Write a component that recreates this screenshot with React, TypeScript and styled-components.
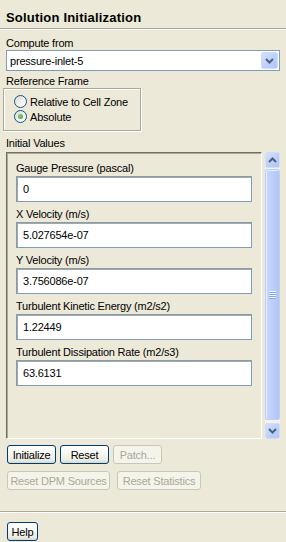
import styled, { createGlobalStyle } from 'styled-components';

const GlobalStyle = createGlobalStyle`
  html, body {
    margin: 0;
    background: #ece9d8;
  }
  body {
    font-family: "Liberation Sans", Arial, sans-serif;
    font-size: 11px;
    letter-spacing: -0.2px;
    color: #000;
  }
`;

const Root = styled.div`
  width: 286px;
  height: 542px;
  display: flex;
  flex-direction: column;
  overflow: hidden;
  background: #ece9d8;
`;

const Header = styled.div`
  padding: 9px 6px 1px;
  font-weight: bold;
  font-size: 13px;
  letter-spacing: 0.2px;
  line-height: 18px;
  border-bottom: 1px solid #aca899;
  box-shadow: 0 1px 0 #fff;
`;

const Body = styled.div`
  flex: 1;
  display: flex;
  flex-direction: column;
  padding: 0 6px;
`;

const Caption = styled.div<{ $top: number }>`
  margin-top: ${(p) => p.$top}px;
  line-height: 13px;
  white-space: nowrap;
`;

const Combo = styled.div`
  box-sizing: border-box;
  height: 21px;
  display: flex;
  align-items: center;
  padding: 1px;
  border: 1px solid #7f9db9;
  background: #fff;
`;

const ComboText = styled.span`
  flex: 1;
  padding-left: 2px;
`;

const ArrowButton = styled.div<{ $w: number; $h: number }>`
  box-sizing: border-box;
  width: ${(p) => p.$w}px;
  height: ${(p) => p.$h}px;
  display: flex;
  align-items: center;
  justify-content: center;
  border: 1px solid #d2ddf8;
  border-radius: 2px;
  background: linear-gradient(135deg, #d3e0fd 0%, #bccffa 60%, #b0c6f6 100%);
`;

const GroupBox = styled.div`
  box-sizing: border-box;
  width: 138px;
  height: 43px;
  margin-left: -3px;
  padding: 5px 0 0 10px;
  border: 1px solid #aca899;
  box-shadow: inset 1px 1px 0 #fff, 1px 1px 0 #fff;
`;

const RadioRow = styled.div`
  display: flex;
  align-items: center;
  gap: 3px;
  height: 15px;
`;

const RadioCircle = styled.span<{ $checked?: boolean }>`
  box-sizing: border-box;
  width: 13px;
  height: 13px;
  border-radius: 50%;
  border: 1px solid #1c5180;
  background: linear-gradient(135deg, #dcdcd5 0%, #f3f3ef 60%, #fff 100%);
  display: flex;
  align-items: center;
  justify-content: center;

  &::after {
    content: '';
    display: ${(p) => (p.$checked ? 'block' : 'none')};
    width: 5px;
    height: 5px;
    border-radius: 50%;
    background: radial-gradient(circle at 40% 40%, #7fd27f, #3a9a4a);
  }
`;

const PanelRow = styled.div`
  margin-top: 2px;
  height: 287px;
  display: flex;
  gap: 3px;
`;

const Panel = styled.div`
  flex: 1;
  padding: 3px 9px 0;
  border-top: 1px solid #716f64;
  border-left: 1px solid #716f64;
  border-right: 1px solid #fff;
  border-bottom: 1px solid #fff;
  box-shadow: inset 1px 1px 0 #aca899;
`;

const Field = styled.div`
  padding-top: 5px;
`;

const FieldLabel = styled.div`
  line-height: 15px;
  white-space: nowrap;
`;

const TextBox = styled.div`
  box-sizing: border-box;
  height: 26px;
  display: flex;
  align-items: center;
  padding-left: 6px;
  border: 1px solid #7f9db9;
  background: #fff;
  box-shadow: inset 1px 1px 0 #aca899;
`;

const Scrollbar = styled.div`
  width: 15px;
  display: flex;
  flex-direction: column;
  background: #f4f3ee;
`;

const Track = styled.div`
  flex: 1;
  display: flex;
  padding: 1px 0 3px;
`;

const Thumb = styled.div`
  flex: 1;
  display: flex;
  align-items: center;
  justify-content: center;
  border: 1px solid #bcd0f8;
  border-radius: 2px;
  background: linear-gradient(90deg, #c9d8fd 0%, #bccefa 50%, #b2c6f6 100%);
  box-shadow: inset 1px 1px 0 #e4ecff;
`;

const Grip = styled.span`
  width: 7px;
  height: 8px;
  background: repeating-linear-gradient(
    180deg,
    #eef3ff 0,
    #eef3ff 1px,
    #8ca8e6 1px,
    #8ca8e6 2px
  );
`;

const ButtonRow = styled.div<{ $top: number; $gap: number }>`
  display: flex;
  gap: ${(p) => p.$gap}px;
  margin: ${(p) => p.$top}px 0 0 1px;
`;

const Button = styled.div<{ $w: number; $disabled?: boolean }>`
  box-sizing: border-box;
  width: ${(p) => p.$w}px;
  height: 19px;
  display: flex;
  align-items: center;
  justify-content: center;
  border-radius: 3px;
  white-space: nowrap;
  border: 1px solid ${(p) => (p.$disabled ? '#c9c7ba' : '#003c74')};
  color: ${(p) => (p.$disabled ? '#aca899' : '#000')};
  background: ${(p) =>
    p.$disabled
      ? '#f5f4ea'
      : 'linear-gradient(180deg, #ffffff 0%, #f7f7f3 45%, #ebeae2 85%, #d8d5c9 100%)'};
`;

const Footer = styled.div`
  padding: 10px 7px 1px;
  border-top: 1px solid #aca899;
  box-shadow: inset 0 1px 0 #fff;
`;

function Chevron({ up }: { up?: boolean }) {
  return (
    <svg width="9" height="6" viewBox="0 0 9 6">
      <path
        d={up ? 'M1 5 L4.5 1.5 L8 5' : 'M1 1 L4.5 4.5 L8 1'}
        fill="none"
        stroke="#4d6185"
        strokeWidth="2"
      />
    </svg>
  );
}

const fields = [
  { label: 'Gauge Pressure (pascal)', value: '0' },
  { label: 'X Velocity (m/s)', value: '5.027654e-07' },
  { label: 'Y Velocity (m/s)', value: '3.756086e-07' },
  { label: 'Turbulent Kinetic Energy (m2/s2)', value: '1.22449' },
  { label: 'Turbulent Dissipation Rate (m2/s3)', value: '63.6131' },
];

export default function App() {
  return (
    <Root>
      <GlobalStyle />
      <Header>Solution Initialization</Header>
      <Body>
        <Caption $top={8}>Compute from</Caption>
        <Combo>
          <ComboText>pressure-inlet-5</ComboText>
          <ArrowButton $w={17} $h={17}>
            <Chevron />
          </ArrowButton>
        </Combo>
        <Caption $top={4}>Reference Frame</Caption>
        <GroupBox>
          <RadioRow>
            <RadioCircle />
            Relative to Cell Zone
          </RadioRow>
          <RadioRow>
            <RadioCircle $checked />
            Absolute
          </RadioRow>
        </GroupBox>
        <Caption $top={6}>Initial Values</Caption>
        <PanelRow>
          <Panel>
            {fields.map((f) => (
              <Field key={f.label}>
                <FieldLabel>{f.label}</FieldLabel>
                <TextBox>{f.value}</TextBox>
              </Field>
            ))}
          </Panel>
          <Scrollbar>
            <ArrowButton $w={15} $h={16}>
              <Chevron up />
            </ArrowButton>
            <Track>
              <Thumb>
                <Grip />
              </Thumb>
            </Track>
            <ArrowButton $w={15} $h={16}>
              <Chevron />
            </ArrowButton>
          </Scrollbar>
        </PanelRow>
        <ButtonRow $top={6} $gap={4}>
          <Button $w={49}>Initialize</Button>
          <Button $w={49}>Reset</Button>
          <Button $w={49} $disabled>
            Patch...
          </Button>
        </ButtonRow>
        <ButtonRow $top={7} $gap={7}>
          <Button $w={103} $disabled>
            Reset DPM Sources
          </Button>
          <Button $w={84} $disabled>
            Reset Statistics
          </Button>
        </ButtonRow>
      </Body>
      <Footer>
        <Button $w={31}>Help</Button>
      </Footer>
    </Root>
  );
}
